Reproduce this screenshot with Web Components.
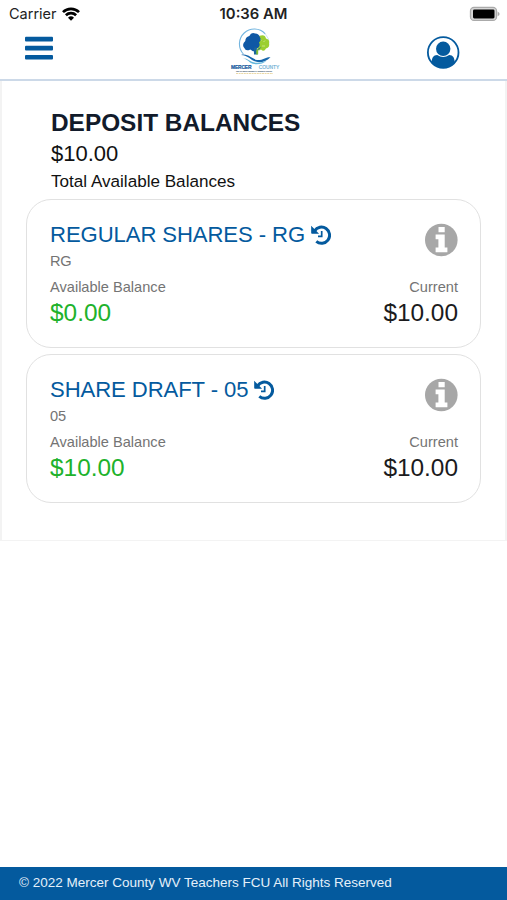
<!DOCTYPE html>
<html lang="en">
<head>
<meta charset="utf-8">
<title>Deposit Balances</title>
<style>
html, body { margin: 0; height: 100%; }
body {
    --brand: #045a9e;
    background: #fff;
    color: #111;
    font-family: "Liberation Sans", Arial, sans-serif;
    overflow: hidden;
}
</style>
</head>
<body>
<mc-app></mc-app>
<script>
"use strict";

function define(tag, html) {
    const template = document.createElement('template');
    template.innerHTML = html;
    window.customElements.define(tag, class extends HTMLElement {
        constructor() {
            super();
            this.attachShadow({ mode: 'open' }).appendChild(template.content.cloneNode(true));
        }
    });
}

define('mc-status-bar', `
<style>
:host {
    display: grid;
    grid-template-columns: 1fr auto 1fr;
    align-items: center;
    box-sizing: border-box;
    height: 28px;
    padding: 0 7px 0 9px;
    font: 14.5px/28px Inter, sans-serif;
    color: #222;
}
.carrier { display: flex; align-items: center; gap: 5px; }
.time { font-weight: 600; font-size: 14.8px; margin-right: 2px; }
.battery { justify-self: end; margin-top: -1px; }
svg { display: block; margin-top: -1px; }
</style>
<div class="carrier"><span>Carrier</span>
    <svg width="18" height="14" viewBox="0 0 18 14" fill="none" stroke="#000" stroke-width="2.7">
        <path d="M1 5.1a11.4 11.4 0 0 1 16 0M3.9 8.3a7.3 7.3 0 0 1 10.2 0"/>
        <path d="M9 13.8 6 10.8a4.3 4.3 0 0 1 6 0z" fill="#000" stroke="none"/>
    </svg>
</div>
<div class="time">10:36 AM</div>
<svg class="battery" width="31" height="16" viewBox="0 0 31 16">
    <rect x="1.5" y="1.4" width="26" height="13" rx="3.5" fill="#d6d6d6" stroke="#aaa" stroke-width="1.3"/>
    <rect x="4" y="3.4" width="21.500" height="9" rx="1.3"/>
    <path d="M28.600 5.500q4 2.400 0 4.800z" fill="#aaa"/>
</svg>
`);

define('mc-logo', `
<style>
:host { display: block; }
svg { display: block; font-family: "Liberation Sans", Arial, sans-serif; }
</style>
<svg width="68" height="50" viewBox="-8 0 68 50">
    <path d="M14.400 26A14.300 14.300 0 0 1 36.200 5.800" fill="none" stroke="#73b5df" stroke-width="1.100"/>
    <path d="M36.200 5.800q4.500 4.500 3.800 10.800" fill="none" stroke="#c4deed" stroke-width=".8"/>
    <path d="M28 11q1-3.500 4-3.500 4-1 5 3 4 1 3 5 1 4-3 5-2 4-5 1l-2 1-3-4z" fill="#9bcf32"/>
    <path d="M31 11l1.500 1.500M34.500 14l1.500-1.500M33 18l3 0" stroke="#d9efa7" stroke-width=".7"/>
    <path d="M15.500 20.300q-3.200-4 .8-7.300 0-4 4-5 2-4.500 6-2.500 3.500 0 4.500 3.500 2 3-.8 5.500 2 4-2 6l-1.700 1-2 2-3-2q-4.600 2.200-5.800-1.200z" fill="#0f58a5"/>
    <path d="M24.800 20l.2 6.500h3.600l-.6-3 4.500-4.500-4.700 2.600-.5-2.600z" fill="#1a649c"/>
    <path d="M27.300 26.500l-.1-4 2.200-2.500-.3 6.500z" fill="#80bd36"/>
    <path d="M12 27c7-2 11 4.200 16 5 6 .6 7.500-3 13.500-2.800-5 5.200-12.300 6.300-17 3.600-4-2.300-6.300-5.300-12.500-5.800z" fill="#1767ac"/>
    <path d="M14 30.300c5 0 7 3.700 12.500 4.500 4 .3 7.500-.6 11-2-3.400 3.400-9.600 4.300-13.700 3-3.400-1-5-4.300-9.800-5.500z" fill="#66b7dc"/>
    <text x="2" y="41.400" font-size="4.900" font-weight="bold" fill="#155b9e" stroke="#155b9e" stroke-width=".2" textLength="20.500">MERCER</text>
    <text x="29.700" y="41.400" font-size="4.900" fill="#5fa9d2" stroke="#71b3d6" stroke-width=".15" textLength="20.500">COUNTY</text>
    <text x="7" y="43.900" font-size="2.100" fill="#596f83" stroke="#596f83" stroke-width=".1" textLength="36">TEACHERS FEDERAL CREDIT UNION</text>
    <path d="M7 45.500h37" stroke="#ead8a6" stroke-width="1" stroke-dasharray="2 .6"/>
</svg>
`);

define('mc-header', `
<style>
:host {
    display: grid;
    grid-template-columns: 1fr auto 1fr;
    align-items: start;
    box-sizing: border-box;
    height: 53px;
    border-bottom: 2px solid #ccd9e8;
    color: var(--brand);
}
svg { display: block; }
.menu { margin: 8px 0 0 25px; }
mc-logo { margin-left: 2px; }
.user { justify-self: end; margin: 8px 47px 0 0; }
</style>
<svg class="menu" width="28" height="25" viewBox="0 0 28 25" fill="currentColor">
    <rect y=".7" width="28" height="4.700" rx="1"/>
    <rect y="9.800" width="28" height="4.700" rx="1"/>
    <rect y="18.900" width="28" height="4.700" rx="1"/>
</svg>
<mc-logo></mc-logo>
<svg class="user" width="33" height="33" viewBox="0 0 33 33" fill="currentColor">
    <circle cx="16.200" cy="16.500" r="15.300" fill="#fff" stroke="currentColor" stroke-width="1.800"/>
    <circle cx="16.200" cy="12.800" r="7.200"/>
    <path d="M4.600 26.500c.3-4.800 1.700-7.600 5.600-7.600q6 4 12 0c3.900 0 5.300 2.800 5.600 7.600A15.400 15.400 0 0 1 4.600 26.500z"/>
</svg>
`);

define('mc-summary', `
<style>
:host { display: block; padding: 0 25px; }
h1 { margin: 0; font-size: 24.4px; line-height: 31px; color: #121b2b; }
.total { margin-top: 1px; font-size: 22px; line-height: 30px; }
.label { font-size: 17.1px; line-height: 25px; }
</style>
<h1><slot name="title"></slot></h1>
<div class="total"><slot name="total"></slot></div>
<div class="label"><slot></slot></div>
`);

define('mc-account', `
<style>
:host {
    display: flex;
    flex-direction: column;
    box-sizing: border-box;
    height: 149px;
    padding: 20px 22px 0 23px;
    border: 1.5px solid #e1e1e1;
    border-radius: 25px;
    background: #fff;
    color: #747474;
    font-size: 14.6px;
}
.row { display: flex; justify-content: space-between; }
.top { height: 40px; }
.name { display: flex; align-items: center; gap: 6px; height: 29px; color: var(--brand); font-size: 22.1px; letter-spacing: -.08px; white-space: nowrap; }
.code { line-height: 18px; margin-top: -8px; letter-spacing: -.2px; }
.labels { line-height: 18px; margin-top: 8px; }
.amounts { font-size: 24.4px; line-height: 34px; }
.available { color: #20b22b; }
.current { color: #1b1b1d; }
.info { margin-top: 3px; }
svg { display: block; }
</style>
<div class="row top">
    <div class="name"><slot name="name"></slot>
        <svg width="20" height="20" viewBox="0 0 20 20" fill="none" stroke="currentColor">
            <path d="M3.600 5.900A8.100 8.100 0 1 1 5.300 16.400" stroke-width="3"/>
            <path d="M.4 1.300v6.500q0 .6.600.6h6.500z" fill="currentColor" stroke="currentColor" stroke-width=".6" stroke-linejoin="round"/>
            <path d="M10.700 5.900v5.500H7" stroke-width="1.700"/>
        </svg>
    </div>
    <svg class="info" width="34" height="34" viewBox="0 0 34 34">
        <circle cx="17.300" cy="17" r="16.300" fill="#a7a7a7"/>
        <path d="M14.500 3.900h6.200v5.300h-6.200zM11.600 11.400h9.100v13h2.700v4.900H11.600v-4.900h2.800v-8.100h-2.800z" fill="#fff"/>
    </svg>
</div>
<div class="code"><slot name="code"></slot></div>
<div class="row labels"><span>Available Balance</span><span>Current</span></div>
<div class="row amounts">
    <span class="available"><slot name="available"></slot></span>
    <span class="current"><slot name="current"></slot></span>
</div>
`);

define('mc-panel', `
<style>
:host {
    display: flex;
    flex-direction: column;
    gap: 6px;
    box-sizing: border-box;
    height: 460px;
    padding: 26px 24px 0 24px;
    border: solid #f3f3f3;
    border-width: 0 2px 1px;
}
::slotted(mc-summary) { height: 86px; }
::slotted(mc-account) { flex: none; }
</style>
<slot></slot>
`);

define('mc-footer', `
<style>
:host {
    display: block;
    box-sizing: border-box;
    height: 33px;
    margin-top: auto;
    padding-left: 19px;
    background: var(--brand);
    color: #e4f0fa;
    font-size: 13.5px;
    line-height: 31px;
}
</style>
<slot></slot>
`);

define('mc-app', `
<style>
:host { display: flex; flex-direction: column; height: 100vh; }
</style>
<mc-status-bar></mc-status-bar>
<mc-header></mc-header>
<mc-panel>
    <mc-summary>
        <span slot="title">DEPOSIT BALANCES</span>
        <span slot="total">$10.00</span>
        Total Available Balances
    </mc-summary>
    <mc-account>
        <span slot="name">REGULAR SHARES - RG</span>
        <span slot="code">RG</span>
        <span slot="available">$0.00</span>
        <span slot="current">$10.00</span>
    </mc-account>
    <mc-account>
        <span slot="name">SHARE DRAFT - 05</span>
        <span slot="code">05</span>
        <span slot="available">$10.00</span>
        <span slot="current">$10.00</span>
    </mc-account>
</mc-panel>
<mc-footer>© 2022 Mercer County WV Teachers FCU All Rights Reserved</mc-footer>
`);
</script>
</body>
</html>
